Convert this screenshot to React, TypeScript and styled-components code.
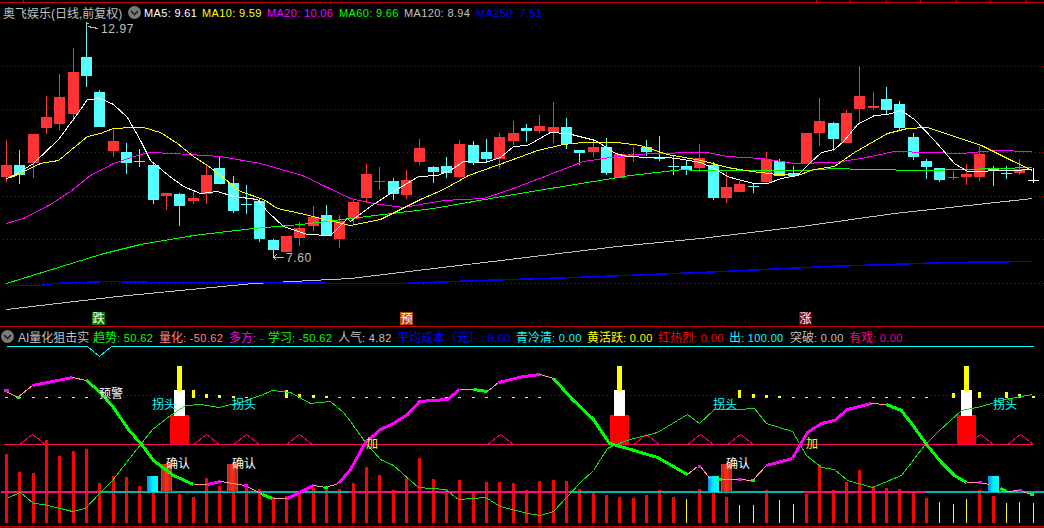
import React from 'react'
import styled, { createGlobalStyle } from 'styled-components'

const GlobalStyle = createGlobalStyle`
  html, body {
    margin: 0;
    padding: 0;
    background: #000;
  }
`

const STEP = 13.333
const barX = (i: number) => Math.round(6 + STEP * i)

// [top of body, bottom of body, wick top, wick bottom, kind]  r = up, c = down
type Candle = [number, number, number, number, 'r' | 'c' | 'w']
const candles: Candle[] = [
  [165, 177, 140, 182, 'r'], [165, 175, 150, 184, 'c'], [134, 163, 134, 178, 'r'], [117, 128, 96, 134, 'r'],
  [97, 124, 74, 130, 'r'], [72, 114, 48, 122, 'r'], [57, 76, 22, 87, 'c'], [92, 127, 90, 127, 'c'],
  [141, 151, 129, 157, 'r'], [152, 163, 143, 174, 'c'], [161, 161, 149, 167, 'c'], [165, 200, 162, 204, 'c'],
  [193, 196, 193, 210, 'r'], [194, 206, 193, 226, 'c'], [198, 201, 190, 204, 'r'], [175, 194, 164, 204, 'r'],
  [168, 184, 157, 184, 'c'], [183, 211, 176, 213, 'c'], [204, 204, 185, 214, 'c'], [201, 239, 198, 242, 'c'],
  [240, 250, 239, 258, 'c'], [236, 252, 236, 252, 'r'], [228, 238, 222, 246, 'r'], [217, 226, 206, 231, 'r'],
  [215, 236, 205, 236, 'c'], [221, 239, 215, 248, 'r'], [202, 219, 200, 225, 'r'], [174, 198, 164, 203, 'r'],
  [181, 181, 167, 190, 'r'], [181, 194, 178, 200, 'c'], [180, 195, 170, 199, 'r'], [148, 162, 139, 165, 'r'],
  [167, 172, 166, 183, 'c'], [166, 173, 157, 178, 'c'], [144, 177, 140, 178, 'r'], [145, 163, 141, 165, 'c'],
  [152, 159, 139, 163, 'c'], [137, 159, 133, 169, 'r'], [133, 141, 121, 145, 'r'], [128, 131, 124, 142, 'c'],
  [126, 131, 115, 133, 'r'], [127, 132, 102, 143, 'r'], [127, 144, 118, 149, 'c'], [150, 153, 150, 165, 'c'],
  [147, 152, 141, 157, 'r'], [147, 173, 138, 175, 'c'], [154, 178, 154, 178, 'r'], [154, 154, 147, 162, 'r'],
  [147, 152, 140, 156, 'c'], [158, 158, 136, 161, 'c'], [166, 166, 155, 175, 'c'], [166, 170, 161, 175, 'c'],
  [158, 168, 144, 172, 'r'], [165, 198, 162, 200, 'c'], [187, 198, 172, 203, 'r'], [184, 192, 181, 192, 'r'],
  [186, 186, 183, 193, 'c'], [159, 182, 152, 184, 'r'], [161, 176, 159, 176, 'c'], [173, 176, 166, 176, 'c'],
  [133, 163, 133, 163, 'r'], [121, 133, 98, 146, 'r'], [123, 139, 122, 151, 'c'], [113, 143, 110, 143, 'r'],
  [96, 109, 66, 124, 'r'], [106, 108, 92, 110, 'r'], [99, 110, 87, 115, 'c'], [104, 128, 101, 131, 'c'],
  [137, 157, 133, 160, 'c'], [161, 167, 159, 179, 'c'], [168, 180, 168, 182, 'c'], [177, 177, 171, 180, 'r'],
  [174, 177, 164, 185, 'r'], [154, 177, 146, 181, 'r'], [169, 171, 166, 186, 'c'], [173, 173, 166, 179, 'c'],
  [169, 173, 159, 175, 'r'], [180, 180, 168, 183, 'w'],
]

const ma5 = '6,178 13,175 33,163 58,139 78,112 87,99 100,98 113,104 127,117 140,140 150,160 168,175 183,186 200,193 217,191 233,196 257,199 267,211 283,226 307,234 330,235 347,218 350,221 370,206 390,193 418,176 437,175 450,170 463,161 485,162 500,157 513,146 527,145 550,132 567,133 583,137 595,140 615,153 627,156 650,157 667,157 683,159 700,162 714,168 727,176 737,179 754,183 767,183 781,178 797,175 809,163 821,152 834,149 844,140 857,124 874,115 887,114 901,110 914,119 934,140 954,163 967,171 981,171 994,170 1011,170 1032,169'
const ma10 = '6,178 13,176 40,163 58,160 70,150 87,136 100,133 113,128 133,127 143,127 160,132 177,143 193,156 207,165 220,175 240,191 263,199 277,208 300,213 333,221 350,225 380,219 400,209 420,199 443,189 468,175 510,160 537,150 563,144 583,142 617,142 640,145 667,154 701,160 727,167 751,171 777,174 797,175 814,169 834,166 854,152 887,133 907,128 927,127 954,136 981,145 1011,160 1032,170'
const ma20 = '6,223 23,218 50,204 70,191 90,175 113,163 140,154 150,152 173,153 220,156 260,163 302,175 350,198 373,203 403,207 443,200 483,198 510,189 547,175 583,161 617,156 650,153 700,152 707,152 727,156 761,158 794,163 834,162 861,158 894,151 961,153 994,150 1032,151'
const ma60 = '6,283 100,254 140,244 193,235 253,228 300,224 350,218 383,214 433,208 490,198 550,188 630,175 683,169 694,170 761,170 804,170 834,168 864,169 927,170 1032,167'
const ma120 = '6,309 117,296 253,283 350,278 517,258 617,246 700,238 801,226 894,213 1032,198'
const ma250 = '6,285 40,285 53,283 80,282 107,281 160,282 253,282 350,283 400,283 480,280 573,277 700,272 827,266 947,262 1032,261'

const gridRows = [66, 109, 152, 196, 239, 283]
const axisTicks = [23, 816, 850, 886, 920, 956, 990, 1026]

const maItems = [
  { name: 'MA5', value: '9.61', color: '#ffffff', width: 58 },
  { name: 'MA10', value: '9.59', color: '#ffff00', width: 65 },
  { name: 'MA20', value: '10.06', color: '#ff00ff', width: 72 },
  { name: 'MA60', value: '9.66', color: '#00ff00', width: 65 },
  { name: 'MA120', value: '8.94', color: '#c0c0c0', width: 72 },
  { name: 'MA250', value: '7.51', color: '#0000ff', width: 70 },
]

const indicatorItems = [
  { name: '趋势', value: '50.62', color: '#00ff00', width: 66 },
  { name: '量化', value: '-50.62', color: '#ff8080', width: 70 },
  { name: '多方', value: '-', color: '#ff00ff', width: 39 },
  { name: '学习', value: '-50.62', color: '#00ff00', width: 70 },
  { name: '人气', value: '4.82', color: '#c0c0c0', width: 59 },
  { name: '平均成本（元）', value: '9.60', color: '#0000ff', width: 119 },
  { name: '青冷清', value: '0.00', color: '#00ffff', width: 71 },
  { name: '黄活跃', value: '0.00', color: '#ffff00', width: 71 },
  { name: '红热烈', value: '0.00', color: '#ff0000', width: 71 },
  { name: '出', value: '100.00', color: '#00ffff', width: 61 },
  { name: '突破', value: '0.00', color: '#c0c0c0', width: 59 },
  { name: '有戏', value: '0.00', color: '#ff0080', width: 60 },
]

// height of the red / yellow columns in the lower pane, top y by bar index
const columnTops = [
  454, 472, 473, 440, 456, 451, 449, 483, 476, 477, 486, 492, 492, 494, 497, 478, 486, 492, 486, 489, 497, 496, 494, 488, 488, 489,
  483, 467, 475, 490, 478, 458, 479, 489, 480, 492, 482, 482, 483, 490, 481, 480, 481, 489, 491, 495, 497, 498, 495, 490, 497, 499,
  489, 492, 497, 505, 505, 490, 500, 504, 494, 465, 490, 482, 470, 486, 488, 489, 492, 498, 502, 504, 499, 490, 496, 503, 502, 503,
]
const yellowColumns = [51, 55, 56, 58, 59, 70, 71, 72, 75, 76, 77]

const dashTops: Record<number, number> = {
  14: 390, 15: 394, 16: 395, 17: 396, 21: 390, 22: 394, 23: 395, 24: 396, 25: 397,
  55: 390, 56: 394, 57: 395, 58: 396, 71: 393, 73: 392, 75: 392, 76: 394, 77: 396,
}
const dashBars = [
  0, 1, 2, 3, 4, 5, 6, 18, 26, 27, 28, 29, 30, 31, 32, 33, 34, 35, 36, 37, 38, 39, 40,
  59, 60, 61, 62, 63, 64, 65, 66, 67, 68, 69,
]

const signalStacks = [179, 619, 966]
const peaks = [32, 206, 246, 299, 500, 646, 700, 740, 980, 1020]
const blueBoxes = [147, 708, 988]
const redBoxes = [161, 227, 721]

const baseSegments = [
  { from: 1, to: 100, color: '#ff0a8c' },
  { from: 100, to: 350, color: '#00b4b4' },
  { from: 350, to: 570, color: '#ff0a8c' },
  { from: 570, to: 804, color: '#00b4b4' },
  { from: 804, to: 925, color: '#ff0a8c' },
  { from: 925, to: 1044, color: '#00b4b4' },
]

const oscillator = '8,497 20,492 33,503 43,504 60,508 72,511 85,508 100,492 112,480 140,444 152,429 170,415 185,405 200,404 218,407 240,402 260,395 272,390 290,392 310,403 330,401 343,412 350,421 365,442 380,459 393,465 418,487 445,489 458,499 485,497 500,506 527,513 540,515 553,511 580,482 593,470 607,448 613,445 630,439 657,432 687,414 699,423 714,409 737,409 754,408 766,423 792,431 806,455 821,467 834,469 847,480 872,487 901,475 924,445 939,430 961,410 981,406 1004,399 1032,394'

const trendThin = [
  '4,390 17,397 32,385', '72,377 86,380', '193,484 207,484', '220,481 245,485 262,494', '272,498 287,498', '313,485 325,487 338,483',
  '459,389 473,389', '487,391 498,382', '540,374 553,378', '687,474 697,466', '700,466 710,479', '719,479 739,479 752,480 766,465',
  '871,403 886,404', '966,482 979,482 989,484', '1006,491 1019,490 1031,494',
]
const trendMagenta = [
  '3,390 8,390', '32,385 72,377', '207,484 220,481', '243,485 247,485', '287,498 313,485', '338,483 350,469 365,442 380,429 393,423 407,414 419,401 447,399 459,389',
  '498,382 523,376 540,374', '697,466 700,466', '737,479 741,479', '766,465 792,458 801,442 807,432 821,423 834,420 847,409 871,403', '977,482 981,482', '1017,490 1021,490',
]
const trendGreen = [
  '16,397 19,397', '86,380 100,392 113,407 128,429 142,445 153,460 173,475 193,484', '262,494 272,498', '323,487 327,487', '473,389 487,391',
  '553,378 572,399 593,419 609,443 627,448 657,457 687,474', '717,479 721,479', '750,480 754,480', '886,404 901,410 914,427 926,444 941,462 954,475 966,482', '1000,488 1006,491', '1029,494 1033,494',
]

const notes = [
  { text: '预警', x: 99, y: 394, color: '#ffffff' },
  { text: '拐头', x: 152, y: 405, color: '#00ffff' },
  { text: '拐头', x: 232, y: 405, color: '#00ffff' },
  { text: '拐头', x: 713, y: 405, color: '#00ffff' },
  { text: '拐头', x: 993, y: 405, color: '#00ffff' },
  { text: '确认', x: 166, y: 464, color: '#ffffff' },
  { text: '确认', x: 232, y: 464, color: '#ffffff' },
  { text: '确认', x: 726, y: 464, color: '#ffffff' },
  { text: '加', x: 366, y: 444, color: '#ffff00' },
  { text: '加', x: 806, y: 444, color: '#ffff00' },
]

const signals = [
  { text: '跌', x: 92, color: '#008000' },
  { text: '预', x: 400, color: '#b84300' },
  { text: '涨', x: 799, color: '#800000' },
]

const Screen = styled.div`
  width: 1044px;
  height: 528px;
  background: #000;
  overflow: hidden;
  display: flex;
  flex-direction: column;
  font-family: 'Liberation Sans', 'Noto Sans CJK SC', sans-serif;
`

const AxisStrip = styled.svg`
  display: block;
  flex: none;
`

const HeaderRow = styled.div`
  display: flex;
  align-items: center;
  height: 19px;
  flex: none;
  padding-left: ${({ $left }: { $left: number }) => $left}px;
  font-size: 11px;
  white-space: nowrap;
`

const Title = styled.span`
  color: #c0c0c0;
  font-size: 12px;
  font-family: 'Liberation Sans', 'Noto Sans CJK SC', sans-serif;
  width: ${({ $width }: { $width: number }) => $width}px;
  flex: none;
`

const FoldButton = styled.svg`
  flex: none;
  display: block;
`

const Reading = styled.span<{ $color: string; $width: number }>`
  color: ${({ $color }) => $color};
  width: ${({ $width }) => $width}px;
  flex: none;
  letter-spacing: 0.35px;
`

const Cn = styled.span`
  font-size: 12px;
  letter-spacing: 0;
`

const Chart = styled.svg`
  display: block;
  flex: none;
`

const Divider = styled.div`
  height: 1px;
  flex: none;
  background: #c40000;
`

const Trace = styled.polyline<{ $color: string; $w?: number }>`
  fill: none;
  stroke: ${({ $color }) => $color};
  stroke-width: ${({ $w }) => $w ?? 1};
  shape-rendering: crispEdges;
  transform: translate(0.5px, 0.5px);
`

const Rule = styled.line<{ $color: string; $w?: number }>`
  stroke: ${({ $color }) => $color};
  stroke-width: ${({ $w }) => $w ?? 1};
  shape-rendering: crispEdges;
`

const Dotted = styled.line`
  stroke: #a00000;
  stroke-width: 1;
  stroke-dasharray: 1 3;
  shape-rendering: crispEdges;
`

const Block = styled.rect<{ $color: string }>`
  fill: ${({ $color }) => $color};
  shape-rendering: crispEdges;
`

const Note = styled.text<{ $color: string; $size?: number }>`
  fill: ${({ $color }) => $color};
  font-size: ${({ $size }) => $size ?? 12}px;
  font-family: 'Liberation Sans', 'Noto Sans CJK SC', sans-serif;
  dominant-baseline: central;
`

const candleColor = { r: '#ff3333', c: '#55ffff', w: '#ffffff' }

function CandleMark({ c, i }: { c: Candle; i: number }) {
  const [top, bottom, high, low, kind] = c
  const x = barX(i)
  const color = candleColor[kind]
  return (
    <g>
      <Rule x1={x + 0.5} x2={x + 0.5} y1={high} y2={low} $color={color} />
      <Block x={x - 5} y={top} width={11} height={Math.max(bottom - top, 1)} $color={color} />
    </g>
  )
}

function MainChart() {
  return (
    <Chart width={1044} height={304} viewBox="0 22 1044 304">
      {gridRows.map((y) => (
        <Dotted key={y} x1={3} x2={1044} y1={y + 0.5} y2={y + 0.5} />
      ))}
      {candles.map((c, i) => (
        <CandleMark key={i} c={c} i={i} />
      ))}
      <Trace points={ma120} $color="#c0c0c0" />
      <Trace points={ma250} $color="#0000ff" $w={1.5} />
      <Trace points={ma60} $color="#00ff00" />
      <Trace points={ma20} $color="#ff00ff" />
      <Trace points={ma10} $color="#ffff00" />
      <Trace points={ma5} $color="#ffffff" />

      <Trace points="88,23 86,23 86,27" $color="#c0c0c0" />
      <Trace points="88,26 92,27 98,28" $color="#c0c0c0" />
      <Note x={101} y={29} $color="#c0c0c0" letterSpacing="0.6">12.97</Note>

      <Trace points="273,257 283,257" $color="#c0c0c0" />
      <Trace points="276,254 273,257 276,260" $color="#c0c0c0" />
      <Note x={286} y={258} $color="#c0c0c0" letterSpacing="0.6">7.60</Note>

      {signals.map((s) => (
        <g key={s.text}>
          <Block x={s.x} y={312} width={13} height={13} $color={s.color} />
          <Note x={s.x + 0.5} y={318.5} $color="#ffffff">{s.text}</Note>
        </g>
      ))}
    </Chart>
  )
}

function SubChart() {
  return (
    <Chart width={1044} height={180} viewBox="0 346 1044 180">
      <defs>
        <linearGradient id="blueBox" x1="0" x2="1" y1="0" y2="0">
          <stop offset="0" stopColor="#0088ff" />
          <stop offset="0.45" stopColor="#00eeff" />
          <stop offset="1" stopColor="#00ffff" />
        </linearGradient>
        <linearGradient id="redBox" x1="0" x2="1" y1="0" y2="0">
          <stop offset="0" stopColor="#b02020" />
          <stop offset="0.5" stopColor="#ff3018" />
          <stop offset="1" stopColor="#a82020" />
        </linearGradient>
      </defs>

      <Trace points="6,346 87,346 99,356 111,346 1033,346" $color="#00ffff" />
      <Dotted x1={3} x2={1044} y1={395.5} y2={395.5} />

      {dashBars.map((i) => (
        <Block key={i} x={barX(i) - 1} y={397} width={3} height={1} $color="#ffff00" />
      ))}
      {Object.entries(dashTops).map(([i, top]) => (
        <Block key={i} x={barX(Number(i)) - 1} y={top} width={3} height={398 - top} $color="#ffff00" />
      ))}

      {signalStacks.map((x) => (
        <g key={x}>
          <Block x={x - 9} y={415} width={19} height={29} $color="#ff0000" />
          <Block x={x - 5} y={390} width={11} height={26} $color="#ffffff" />
          <Block x={x - 2} y={366} width={5} height={25} $color="#ffff00" />
        </g>
      ))}

      <Rule x1={4} x2={1033} y1={444.5} y2={444.5} $color="#ff0066" />
      {peaks.map((x) => (
        <Trace key={x} points={`${x - 13},444 ${x},434 ${x + 13},444`} $color="#e8005a" />
      ))}

      {columnTops.map((top, i) =>
        yellowColumns.includes(i) ? (
          <Block key={i} x={barX(i)} y={top} width={1} height={523 - top} $color="#ffff00" />
        ) : (
          <Block key={i} x={barX(i) - 1} y={top} width={3} height={523 - top} $color="#ff0000" />
        ),
      )}

      {baseSegments.map((s) => (
        <Block key={s.from} x={s.from} y={491} width={s.to - s.from} height={2} $color={s.color} />
      ))}

      {blueBoxes.map((x) => (
        <rect key={x} x={x} y={476} width={11} height={16} fill="url(#blueBox)" shapeRendering="crispEdges" />
      ))}
      {redBoxes.map((x) => (
        <g key={x}>
          <rect x={x} y={464} width={11} height={28} fill="url(#redBox)" shapeRendering="crispEdges" />
          <Block x={x} y={464} width={1} height={28} $color="#c030c0" />
          <Block x={x + 10} y={464} width={1} height={28} $color="#c030c0" />
        </g>
      ))}

      <Trace points={oscillator} $color="#10e010" />
      {trendThin.map((p) => (
        <Trace key={p} points={p} $color="#ff9a9a" />
      ))}
      {trendMagenta.map((p) => (
        <Trace key={p} points={p} $color="#ff00ff" $w={3} />
      ))}
      {trendGreen.map((p) => (
        <Trace key={p} points={p} $color="#00ff00" $w={3} />
      ))}

      {notes.map((n) => (
        <Note key={`${n.text}${n.x}`} x={n.x} y={n.y} $color={n.color}>{n.text}</Note>
      ))}
    </Chart>
  )
}

function Fold() {
  return (
    <FoldButton width={13} height={13} viewBox="0 0 13 13">
      <circle cx={6.5} cy={6.5} r={6.5} fill="#7a7a7a" />
      <path d="M3 5 L6.5 8.5 L10 5" fill="none" stroke="#222" strokeWidth={1.6} />
    </FoldButton>
  )
}

export default function App() {
  return (
    <Screen>
      <GlobalStyle />
      <AxisStrip width={1044} height={3} viewBox="0 0 1044 3">
        <Rule x1={0} x2={1044} y1={2.5} y2={2.5} $color="#c40000" />
        {axisTicks.map((x) => (
          <Rule key={x} x1={x + 0.5} x2={x + 0.5} y1={0} y2={3} $color="#c40000" />
        ))}
      </AxisStrip>

      <HeaderRow $left={3}>
        <Title $width={125}>奥飞娱乐(日线,前复权)</Title>
        <Fold />
        <Reading $color="transparent" $width={3} />
        {maItems.map((m) => (
          <Reading key={m.name} $color={m.color} $width={m.width}>
            {m.name}: {m.value}
          </Reading>
        ))}
      </HeaderRow>

      <MainChart />
      <Divider />

      <HeaderRow $left={1}>
        <Fold />
        <Reading $color="transparent" $width={4} />
        <Title $width={75}>AI量化狙击实</Title>
        {indicatorItems.map((m) => (
          <Reading key={m.name} $color={m.color} $width={m.width}>
            <Cn>{m.name}</Cn>: {m.value}
          </Reading>
        ))}
      </HeaderRow>

      <SubChart />
      <Divider />
    </Screen>
  )
}
